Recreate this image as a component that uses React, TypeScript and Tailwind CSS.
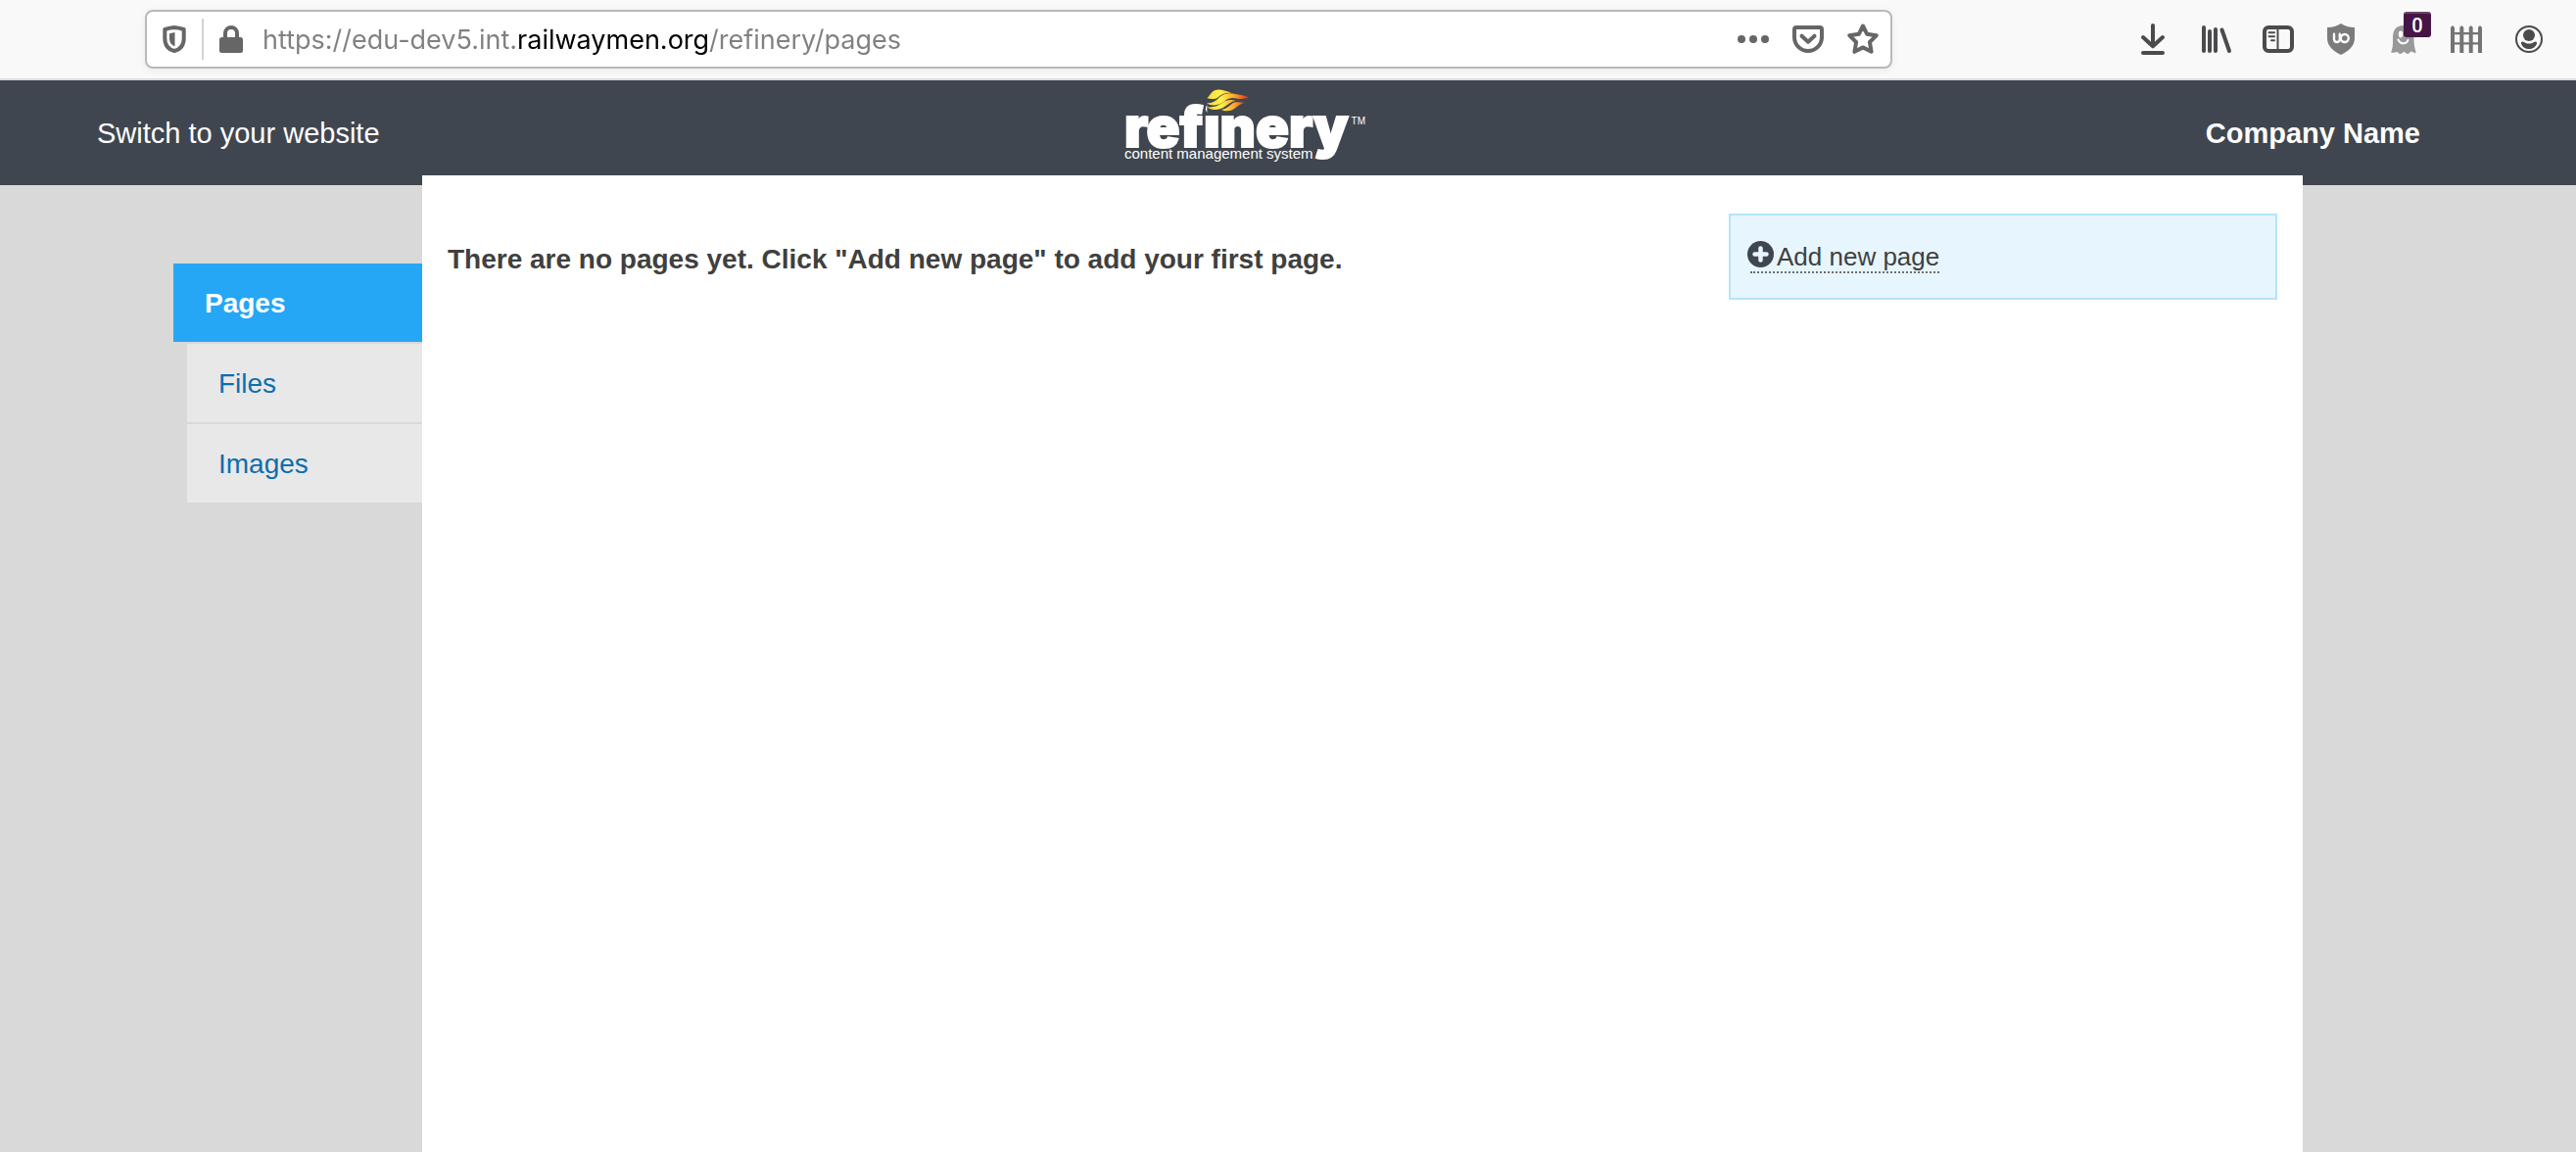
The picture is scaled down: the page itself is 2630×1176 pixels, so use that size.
import type { ReactNode } from "react";

function Glyph({ children }: { children: ReactNode }) {
  return (
    <svg viewBox="0 0 32 32" className="size-8 shrink-0 overflow-visible" fill="none" stroke="currentColor" strokeWidth={4} strokeLinecap="round" strokeLinejoin="round" aria-hidden="true">
      {children}
    </svg>
  );
}

function ToolButton({ label, children }: { label: string; children: ReactNode }) {
  return (
    <button type="button" aria-label={label} className="relative size-8 shrink-0">
      {children}
    </button>
  );
}

function AddressBar() {
  return (
    <div className="ml-[148px] flex h-[60px] flex-1 items-center rounded-lg border-2 border-[#b9b9ba] bg-white px-3 text-[#666667] shadow-[0_2px_8px_rgba(0,0,0,0.06)]">
      <ToolButton label="Tracking protection">
        <Glyph>
          <path d="M16 4C12.5 4.2 9.5 5 6.3 6V15C6.3 22 10 26.5 16 28C22 26.5 25.7 22 25.7 15V6C22.5 5 19.5 4.2 16 4Z" />
          <path d="M16.5 9L11 10.2V15C11 19.5 13 22 16.5 23.2Z" fill="currentColor" stroke="none" />
        </Glyph>
      </ToolButton>
      <div className="mx-3 h-[42px] w-[2px] bg-[#d2d2d2]" />
      <ToolButton label="Site security">
        <Glyph>
          <path d="M10 16V10a6 6 0 0 1 12 0V16" />
          <rect x="4" y="14" width="24" height="16" rx="2.5" fill="currentColor" stroke="none" />
        </Glyph>
      </ToolButton>
      <input
        type="text"
        aria-label="Address"
        readOnly
        value="https://edu-dev5.int.railwaymen.org/refinery/pages"
        className="ml-4 min-w-0 flex-1 bg-[linear-gradient(90deg,#808080_260px,#000_260px,#000_455px,#808080_455px)] bg-clip-text pt-[2px] font-['Inter',sans-serif] text-[27px] leading-9 text-transparent outline-none"
      />
      <div className="flex gap-6">
        <ToolButton label="Page actions">
          <Glyph>
            <g fill="currentColor" stroke="none">
              <circle cx="4" cy="16" r="4" />
              <circle cx="16" cy="16" r="4" />
              <circle cx="28" cy="16" r="4" />
            </g>
          </Glyph>
        </ToolButton>
        <ToolButton label="Save to Pocket">
          <Glyph>
            <path d="M4 4H28a2 2 0 0 1 2 2V14a14 14 0 0 1-28 0V6a2 2 0 0 1 2-2Z" />
            <path d="M9.5 12.7L16 18.8L22.5 12.7" />
          </Glyph>
        </ToolButton>
        <ToolButton label="Bookmark this page">
          <Glyph>
            <path d="M16 2.5L20.2 10.8L29.8 12.2L22.9 19L24.6 28.8L16 24.4L7.4 28.8L9.1 19L2.2 12.2L11.8 10.8Z" />
          </Glyph>
        </ToolButton>
      </div>
    </div>
  );
}

function BrowserBar() {
  return (
    <div className="flex h-[82px] items-center border-b-2 border-[#d9dddd] bg-[#f9f9fa]">
      <AddressBar />
      <div className="ml-[250px] mr-8 flex gap-8 text-[#4b4b4d]">
        <ToolButton label="Downloads">
          <Glyph>
            <path d="M16 2V22M6 14L16 23.2L26 14M6 30H26" />
          </Glyph>
        </ToolButton>
        <ToolButton label="Library">
          <Glyph>
            <path d="M4 4V28M10 8V28M16 6V28M22.5 6.5L30 28" />
          </Glyph>
        </ToolButton>
        <ToolButton label="Sidebars">
          <Glyph>
            <rect x="2" y="4" width="28" height="24" rx="4" />
            <path d="M15.5 5V27" strokeWidth={2} strokeLinecap="butt" />
            <path d="M6.5 9.3H12M6.5 13.3H12M9 17.3H12" strokeWidth={2} />
          </Glyph>
        </ToolButton>
        <ToolButton label="uBlock Origin">
          <Glyph>
            <path d="M16 0C12 2.6 7.5 4 2 4V15C2 23 8 28 16 32C24 28 30 23 30 15V4C24.5 4 20 2.6 16 0Z" fill="#7b7b7b" stroke="none" />
            <path d="M9 10.8V15.5a2.9 2.9 0 0 0 5.8 1V10.8" stroke="#fff" strokeWidth={2.4} />
            <circle cx="19.8" cy="15" r="4" stroke="#fff" strokeWidth={2.4} />
          </Glyph>
        </ToolButton>
        <ToolButton label="Ghostery">
          <Glyph>
            <path d="M5 17C4.5 7 8 2 16 2C24 2 27 8 26.5 17C26.5 22 27.5 26 28.7 29.5C26.5 31 25.5 28.5 24 28.5C22.5 28.5 22 31 20.2 31C18.5 31 18 29 16.5 29C15 29 14.5 31 12.5 31C10.8 31 10.5 29 9 29C7.5 29 5.5 30.5 3.2 29.5C4.5 26 5.3 22 5 17Z" fill="#999" stroke="none" />
            <ellipse cx="13" cy="11" rx="2.2" ry="3.4" fill="#fff" stroke="none" />
            <path d="M10.5 16.5C13 22 19 21 20.5 17" stroke="#fff" strokeWidth={2} />
          </Glyph>
          <span className="absolute left-4 -top-3 flex h-[26px] w-7 items-center justify-center rounded-[3px] border-t-2 border-[#6b4468] bg-[#461545] font-['Roboto',sans-serif] text-[20px] font-medium leading-6 text-white">0</span>
        </ToolButton>
        <ToolButton label="Fence">
          <Glyph>
            <g fill="#747474" stroke="none">
              <path d="M0 30V4L2 2L4 4V30ZM9.3 30V4L11.3 2L13.3 4V30ZM18.7 30V4L20.7 2L22.7 4V30ZM28 30V4L30 2L32 4V30Z" />
              <path d="M0 9H32V11.2H0ZM0 19.2H32V21.4H0Z" />
            </g>
          </Glyph>
        </ToolButton>
        <ToolButton label="Account">
          <Glyph>
            <circle cx="16" cy="16" r="13" strokeWidth={2} />
            <circle cx="16" cy="12" r="6" fill="currentColor" stroke="none" />
            <path d="M8 20.5C7.5 18.5 9.5 17.8 11 19C14 21 18 21 21 19C22.5 17.8 24.5 18.5 24 20.5C22.5 24.5 19.5 26 16 26C12.5 26 9.5 24.5 8 20.5Z" fill="currentColor" stroke="none" />
          </Glyph>
        </ToolButton>
      </div>
    </div>
  );
}

function Logo() {
  return (
    <a href="#refinery" className="relative flex w-[246px] flex-col text-white">
      <span className="h-[53px] font-['Inter',sans-serif] text-[56px] font-black leading-[72px] [-webkit-text-stroke:2px_white]">refinery</span>
      <span className="font-['Liberation_Sans',sans-serif] text-[15px] leading-5">content management system</span>
      <span className="absolute right-0 top-6 font-['Liberation_Sans',sans-serif] text-[10px] leading-3">TM</span>
      <svg viewBox="0 0 135 84" className="absolute left-[83px] -top-1 h-7 w-[45px]" aria-hidden="true">
        <defs>
          <linearGradient id="flame" x1="0" x2="135" y1="0" y2="0" gradientUnits="userSpaceOnUse">
            <stop offset="0" stopColor="#fbd92e" />
            <stop offset="0.35" stopColor="#fff04a" />
            <stop offset="0.65" stopColor="#fba62b" />
            <stop offset="1" stopColor="#dd1f1c" />
          </linearGradient>
        </defs>
        <rect x="4" width="131" height="84" fill="#40464f" />
        <g fill="url(#flame)">
          <path d="M3 30C14 26 14 8 34 5C46 3 60 8 80 14C58 14 50 18 40 26C28 36 14 34 3 30Z" />
          <path d="M3 46C22 46 30 40 42 28C56 14 74 14 92 18C106 21 120 22 133 29C118 32 108 34 98 32C80 28 70 30 58 40C44 52 20 58 3 46Z" />
          <path d="M4 58C24 60 38 54 50 46C62 36 76 34 92 38C80 40 72 46 62 54C46 66 20 72 4 58Z" />
          <path d="M48 66C62 64 70 56 80 48C92 40 104 44 118 44C106 48 96 56 86 64C74 72 58 71 48 66Z" />
        </g>
      </svg>
    </a>
  );
}

export default function App() {
  return (
    <div className="flex min-h-screen flex-col bg-[#d9d9d9] font-['Liberation_Sans',Arial,sans-serif] text-[28px] leading-8 text-[#40403e]">
      <BrowserBar />
      <header className="grid h-[107px] grid-cols-[1fr_auto_1fr] items-start bg-[#40464f] pl-[99px] pr-[159px] text-[29px] text-white">
        <a href="#website" className="mt-[38px] justify-self-start">Switch to your website</a>
        <div className="pr-7 pt-3">
          <Logo />
        </div>
        <span className="mt-[38px] justify-self-end font-bold">Company Name</span>
      </header>
      <div className="-mt-[10px] flex flex-1 pl-[177px] pr-[279px]">
        <nav className="flex w-[254px] shrink-0 flex-col gap-[2px] pt-[90px]">
          <a href="#pages" className="flex h-20 items-center bg-[#26a7f5] pl-8 pt-[2px] font-bold text-white">Pages</a>
          <a href="#files" className="ml-[14px] flex h-20 items-center bg-[#e8e8e8] pl-8 pt-[2px] text-[#0e6eae]">Files</a>
          <a href="#images" className="ml-[14px] flex h-20 items-center bg-[#e8e8e8] pl-8 pt-[2px] text-[#0e6eae]">Images</a>
        </nav>
        <main className="flex flex-1 items-start justify-between bg-white px-[26px]">
          <p className="pt-[70px] font-bold">There are no pages yet. Click "Add new page" to add your first page.</p>
          <aside className="mt-[39px] flex h-[88px] w-[560px] items-center border-2 border-[#b5e4fc] bg-[#e7f6fe] pl-5">
            <a href="#new-page" className="flex items-start border-b-2 border-dotted border-[#6b6e72] text-[26px]">
              <svg viewBox="0 0 27 27" className="-ml-[3px] mr-[3px] mt-px size-[27px]" aria-hidden="true">
                <circle cx="13.5" cy="13.5" r="13.5" fill="#40464f" />
                <path d="M13.5 7.5V19.5M7.5 13.5H19.5" stroke="#e7f6fe" strokeWidth="4.5" strokeLinecap="round" />
              </svg>
              <span className="pt-[2px] leading-[30px]">Add new page</span>
            </a>
          </aside>
        </main>
      </div>
    </div>
  );
}
